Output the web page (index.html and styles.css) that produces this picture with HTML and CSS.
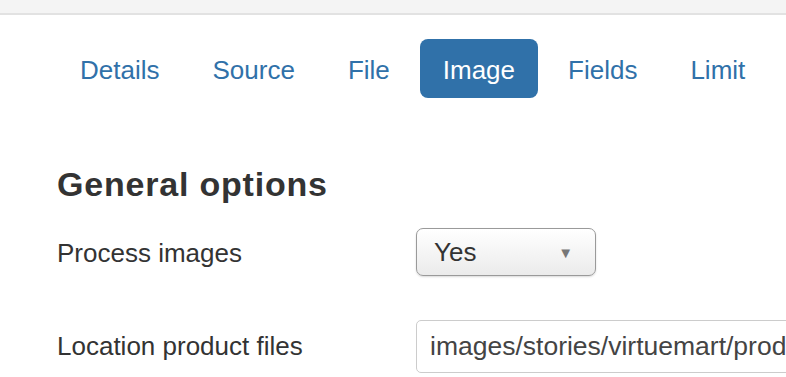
FILE: index.html
```html
<!DOCTYPE html>
<html lang="en">
<head>
    <meta charset="UTF-8">
    <meta name="viewport" content="width=device-width, initial-scale=1.0">
    <title>Import template - Image</title>
    <link rel="stylesheet" href="styles.css">
</head>
<body>

    <div class="topbar"></div>

    <div class="page">
        <ul class="tabs">
            <li><a href="#">Details</a></li>
            <li><a href="#">Source</a></li>
            <li><a href="#">File</a></li>
            <li class="active"><a href="#">Image</a></li>
            <li><a href="#">Fields</a></li>
            <li><a href="#">Limit</a></li>
        </ul>

        <h2>General options</h2>

        <div class="form-row">
            <label class="form-label">Process images</label>
            <div class="select-box">
                <span>Yes</span>
                <span class="caret">&#9660;</span>
            </div>
        </div>

        <div class="form-row">
            <label class="form-label">Location product files</label>
            <input class="text-input" type="text" value="images/stories/virtuemart/product/">
        </div>
    </div>

</body>
</html>
```

FILE: styles.css
```css
* {
    margin: 0;
    padding: 0;
    box-sizing: border-box;
    font-family: "Liberation Sans", Arial, sans-serif;
}

body {
    background-color: #fff;
    color: #333;
    overflow: hidden;
}

.topbar {
    height: 15px;
    background-color: #f4f4f4;
    border-bottom: 2px solid #e2e2e2;
}

.page {
    padding-left: 57px;
    overflow: hidden;
}

.tabs {
    list-style: none;
    display: flex;
    gap: 7px;
    margin-top: 24px;
}

.tabs a {
    display: block;
    height: 59px;
    padding: 3px 23px 0;
    line-height: 56px;
    font-size: 26px;
    color: #3071a9;
    text-decoration: none;
    border-radius: 8px;
}

.tabs .active a {
    background-color: #3071a9;
    color: #fff;
}

h2 {
    font-size: 34px;
    font-weight: bold;
    letter-spacing: 0.8px;
    line-height: 40px;
    margin-top: 66px;
}

.form-row {
    display: flex;
    align-items: center;
    margin-top: 24px;
}

.form-row + .form-row {
    margin-top: 44px;
}

.form-label {
    flex: none;
    width: 359px;
    font-size: 26px;
    padding-top: 3px;
}

.form-row + .form-row .form-label {
    padding-top: 0;
}

.select-box {
    flex: none;
    display: flex;
    align-items: center;
    justify-content: space-between;
    width: 180px;
    height: 48px;
    padding: 0 18px 0 17px;
    border: 1px solid #9a9a9a;
    border-radius: 7px;
    background: linear-gradient(#ffffff, #ebebeb);
    box-shadow: 0 1px 2px rgba(0, 0, 0, 0.15);
    font-size: 26px;
    color: #333;
}

.caret {
    font-size: 15px;
    color: #777;
    margin-right: 4px;
}

.text-input {
    flex: none;
    width: 400px;
    height: 53px;
    padding: 0 13px;
    border: 1px solid #ccc;
    border-radius: 5px;
    font-size: 26.5px;
    color: #444;
}
```
